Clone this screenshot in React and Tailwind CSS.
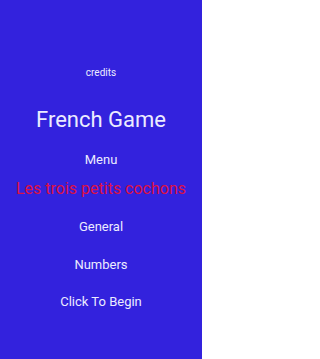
const App = () => {
  return (
    <div
      className="w-[202px] h-[359px] bg-[#3322dd] flex flex-col items-center pt-[67px] text-[#ececff]"
      style={{ fontFamily: "Roboto, 'Liberation Sans', sans-serif" }}
    >
      <p className="text-[10px] leading-[12px]">credits</p>
      <h1 className="mt-[28px] text-[22px] leading-[26px]">French Game</h1>
      <p className="mt-[19px] text-[13px] leading-[16px]">Menu</p>
      <p className="mt-[11px] text-[16px] leading-[20px] text-[#dd1144]">Les trois petits cochons</p>
      <p className="mt-[20px] text-[13px] leading-[16px]">General</p>
      <p className="mt-[22px] text-[13px] leading-[16px]">Numbers</p>
      <p className="mt-[21px] text-[13px] leading-[16px]">Click To Begin</p>
    </div>
  );
};

export default App;
